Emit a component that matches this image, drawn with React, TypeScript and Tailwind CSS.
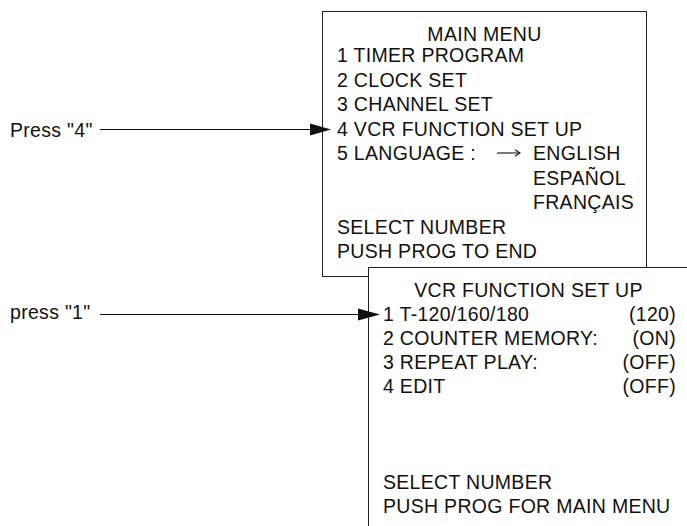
import React from 'react';

const font = "font-['Liberation_Sans',Arial,sans-serif]";

const mainItems = ['1 TIMER PROGRAM', '2 CLOCK SET', '3 CHANNEL SET', '4 VCR FUNCTION SET UP'];

const vcrItems = [
  { label: '1 T-120/160/180', value: '(120)' },
  { label: '2 COUNTER MEMORY:', value: '(ON)' },
  { label: '3 REPEAT PLAY:', value: '(OFF)' },
  { label: '4 EDIT', value: '(OFF)' },
];

const App = () => {
  return (
    <div className={`relative w-[687px] h-[526px] overflow-hidden bg-white text-[#111] ${font}`}>
      {/* main menu screen */}
      <div className="absolute left-[322px] top-[11px] w-[325px] h-[266px] border border-[#222] pt-[14px] text-[19.5px] tracking-[0.3px]">
        <div className="text-center leading-[17px]">MAIN MENU</div>
        <div className="pl-[14px] leading-[24.5px] whitespace-nowrap">
          {mainItems.map((t) => (
            <div key={t}>{t}</div>
          ))}
          <div className="flex items-start">
            <span className="w-[160px]">5 LANGUAGE :</span>
            <span className="w-[36px] h-[24.5px] flex items-center">
              <svg width="24" height="10" viewBox="0 0 24 10">
                <line x1="0" y1="5" x2="22.5" y2="5" stroke="#111" strokeWidth="1.1" />
                <polyline points="18,1.8 23,5 18,8.2" fill="none" stroke="#111" strokeWidth="1.1" />
              </svg>
            </span>
            <div>
              <div>ENGLISH</div>
              <div>ESPAÑOL</div>
              <div>FRANÇAIS</div>
            </div>
          </div>
          <div>SELECT NUMBER</div>
          <div>PUSH PROG TO END</div>
        </div>
      </div>

      {/* vcr function screen, drawn over the first */}
      <div className="absolute left-[368px] top-[267px] w-[321px] h-[300px] border border-[#222] bg-white pt-[10px] text-[19.5px] tracking-[0.3px] leading-[24px] whitespace-nowrap">
        <div className="text-center">VCR FUNCTION SET UP</div>
        <div className="pl-[14px] pr-[12px]">
          {vcrItems.map((r) => (
            <div key={r.label} className="flex justify-between">
              <span>{r.label}</span>
              <span>{r.value}</span>
            </div>
          ))}
          <div className="h-[72px]" />
          <div>SELECT NUMBER</div>
          <div>PUSH PROG FOR MAIN MENU</div>
        </div>
      </div>

      {/* labels and arrows */}
      <div className="absolute left-[10px] top-[118px] text-[19.5px] leading-[24px] tracking-[0.3px]">Press "4"</div>
      <div className="absolute left-[10px] top-[300px] text-[19.5px] leading-[24px] tracking-[0.3px]">press "1"</div>
      <svg className="absolute left-0 top-0" width="687" height="526" viewBox="0 0 687 526">
        <line x1="100" y1="129.5" x2="314" y2="129.5" stroke="#111" strokeWidth="1.2" />
        <polygon points="310,123.5 331,129.5 310,135.5" fill="#111" />
        <line x1="100" y1="314.5" x2="362" y2="314.5" stroke="#111" strokeWidth="1.2" />
        <polygon points="358,308.5 380,314.5 358,320.5" fill="#111" />
      </svg>
    </div>
  );
};

export default App;
